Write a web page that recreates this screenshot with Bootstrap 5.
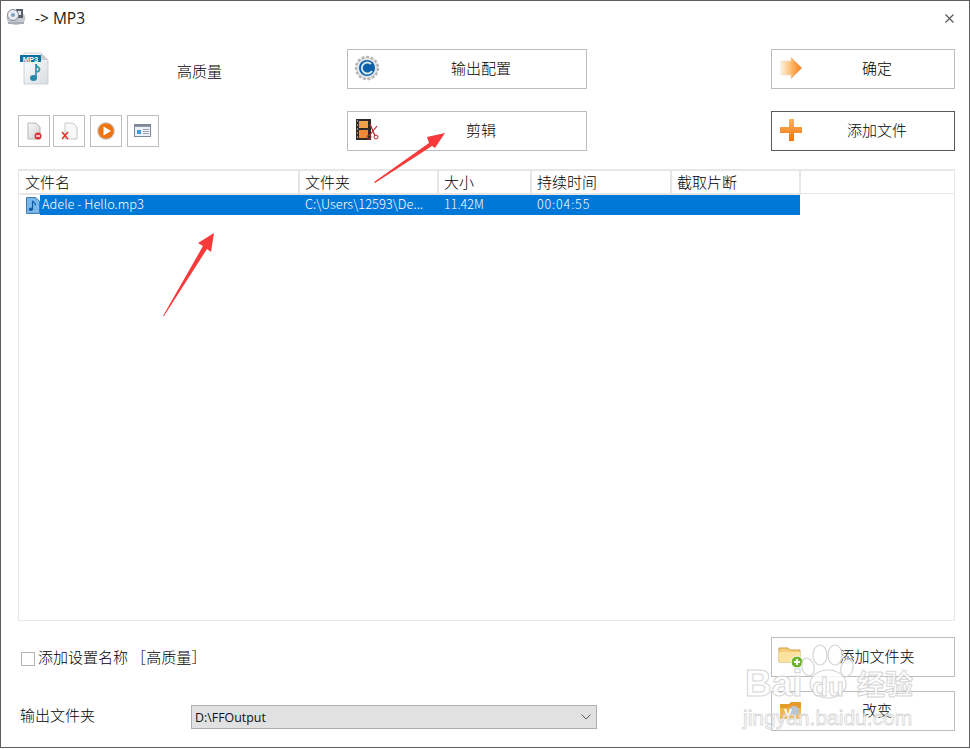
<!DOCTYPE html>
<html lang="zh-CN">
<head>
<meta charset="utf-8">
<title>-> MP3</title>
<link rel="stylesheet" href="https://cdn.jsdelivr.net/npm/bootstrap@5.3.0/dist/css/bootstrap.min.css">
<style>
html,body{margin:0;background:#fff;}
body{font-family:"Open Sans","Noto Sans CJK SC",sans-serif;color:#1a1a1a;font-size:14px;overflow:hidden;}
.cjk{font-family:"Noto Sans CJK SC",sans-serif;font-weight:300;font-size:15px;color:#000;}
.appwin{position:relative;width:970px;height:748px;border:1px solid #5f5f5f;overflow:hidden;}
.titlebar{height:48px;padding:6px 0 0 5px;align-items:flex-start;}
.titletext{font-size:15.5px;margin-left:9px;margin-top:1px;line-height:20px;color:#222;}
.closex{position:absolute;right:15px;top:13px;}
.topgrid{display:grid;grid-template-columns:329px 424px 184px;row-gap:22px;grid-template-rows:40px 40px;padding-left:17px;}
.mp3wrap{padding-left:2px;position:relative;}
.mp3icon{margin-top:3px;margin-right:-30px;}
.quality{margin-left:157px;line-height:40px;margin-top:2px;white-space:nowrap;}
.tbtn{width:32px;height:32px;border:1px solid #bdbdbd;background:#fff;padding:0;display:flex;align-items:center;justify-content:center;border-radius:0;}
.tools{margin-top:4px;}
.gap3{margin-right:3px;}
.gap5{margin-right:5px;}
.winbtn{position:relative;height:40px;width:100%;border:1px solid #bdbdbd;background:#fff;border-radius:0;padding:0 0 0 28px;display:block;text-align:center;}
.midbtn{width:240px;}
.winbtn.dark{border-color:#5a5a5a;}
.winbtn svg{position:absolute;left:5px;top:4px;}
.lbl{display:block;line-height:35px;height:38px;}
.listbox{margin:18px 14px 0 17px;height:452px;border:1px solid #e7e7e7;border-top-width:2px;}
.ftable{border-collapse:collapse;table-layout:fixed;width:781px;margin-left:1px;}
.ftable th{height:23px;padding:0 0 1px 5px;border-right:2px solid #e6e6e6;border-bottom:1px solid #e6e6e6;font-weight:300;line-height:20px;}
.headline{border-bottom:1px solid #e6e6e6;height:23px;margin-bottom:-23px;}
.ftable td{height:20px;padding:0 0 2px 6px;background:#0078d7;color:#fff;font-size:12.5px;line-height:18px;white-space:nowrap;overflow:hidden;}
.ftable td.namecell{padding:0;background:#fff;}
.ftable td.pathcell{font-size:12.9px;}
.namefill{background:#0078d7;flex:1;height:20px;padding-left:2px;line-height:18px;font-size:12.8px;}
.noteicon{width:20px;padding-left:6px;}
.timecell{letter-spacing:.85px;}
.bottomgrid{display:grid;grid-template-columns:1fr 184px;grid-template-rows:40px 40px;row-gap:14px;margin:16px 14px 0 19px;}
.checkrow{gap:3px;padding-left:1px;}
.wincheck{width:14px;height:14px;margin:3px 0 0 0;border:1px solid #b5b5b5;border-radius:0;background:#fff;}
.outlabel{width:171px;margin-top:13px;line-height:22px;}
.pathselect{width:406px;height:24px;margin-top:14px;padding:0 5px 0 3px;background:#e1e1e1;border:1px solid #adadad;font-size:12.4px;color:#111;}
.pathselect span{line-height:24px;margin-top:1px;}
.overlay{position:absolute;left:-1px;top:-1px;pointer-events:none;}
.wm{position:absolute;color:#fff;font-family:"Liberation Sans",sans-serif;-webkit-text-stroke:1px #cfcfcf;pointer-events:none;white-space:nowrap;opacity:.85;}
.wm1{left:744px;top:664px;font-size:37px;font-weight:700;line-height:38px;}
.wm1b{left:811px;top:671px;font-size:26px;font-weight:700;line-height:30px;}
.wm2{left:856px;top:666px;font-size:28px;line-height:32px;font-family:"Noto Sans CJK SC",sans-serif;font-weight:700;}
.wm3{left:742px;top:704px;font-size:21px;line-height:26px;-webkit-text-stroke:.8px #cfcfcf;}
</style>
</head>
<body>
<div class="appwin">
  <div class="titlebar d-flex">
    <svg width="20" height="19" viewBox="0 0 20 19"><ellipse cx="10" cy="11" rx="9.500" ry="7" fill="#c3c8ce"/><rect x="10" y="2" width="7" height="9" fill="#555f69"/><rect x="12" y="4" width="3" height="4" fill="#e6e8ea"/><circle cx="7" cy="8" r="5.500" fill="#e9edf1" stroke="#7d8791"/><circle cx="7" cy="8" r="2" fill="#7ea3c4"/><path d="M2 15h16v2H2z" fill="#a7aeb5"/></svg>
    <span class="titletext">-&gt; MP3</span>
    <svg class="closex" width="9" height="9" viewBox="0 0 9 9"><path d="M.5.5l8 8M8.500.5l-8 8" stroke="#555" stroke-width="1.100"/></svg>
  </div>

  <div class="topgrid">
    <div class="mp3wrap d-flex">
      <svg class="mp3icon flex-shrink-0" width="30" height="34" viewBox="0 0 30 34">
        <defs><linearGradient id="pg" x1="0" y1="0" x2="1" y2="1"><stop offset="0" stop-color="#fff"/><stop offset="1" stop-color="#d9dde0"/></linearGradient></defs>
        <path d="M4 1h17l7 7v24H4z" fill="url(#pg)" stroke="#c4c8cc" stroke-width=".8"/>
        <path d="M21 1v7h7z" fill="#c9cdd1"/>
        <rect x="0" y="3" width="21" height="7" fill="#0f6fa3"/>
        <text x="10.500" y="9.500" text-anchor="middle" font-size="7.500" font-weight="700" fill="#fff" font-family="Liberation Sans">MP3</text>
        <path d="M16 26V12c0 3 2 3 3 4s1 3-2 4" fill="none" stroke="#2b86ab" stroke-width="1.600"/>
        <ellipse cx="13.500" cy="26" rx="3.500" ry="3" fill="#2b86ab"/>
      </svg>
      <div class="quality cjk">高质量</div>
    </div>
    <button class="winbtn midbtn cjk"><svg width="28" height="28" viewBox="0 0 28 28"><circle cx="14" cy="14" r="11" fill="#e6e6e6" stroke="#b5b5b5" stroke-width="2.400" stroke-dasharray="3 1.600"/><circle cx="14" cy="14" r="8" fill="#0d5fa8"/><path d="M18 10a5.500 5.500 0 1 0 1 7" fill="none" stroke="#cfe6f7" stroke-width="2"/></svg><span class="lbl">输出配置</span></button>
    <button class="winbtn cjk"><svg width="28" height="28" viewBox="0 0 28 28"><defs><linearGradient id="ok" x1="0" x2="1"><stop offset="0" stop-color="#fdf3df"/><stop offset=".5" stop-color="#fdb96a"/><stop offset="1" stop-color="#f47a14"/></linearGradient></defs><path d="M4 7h10V3l11 11-11 11v-4H4z" fill="url(#ok)" stroke="#e7d6c4" stroke-width=".5"/></svg><span class="lbl">确定</span></button>

    <div class="tools d-flex">
      <button class="tbtn gap3" aria-label="移除"><svg width="18" height="18" viewBox="0 0 18 18"><defs><linearGradient id="gp" x1="0" y1="0" x2="1" y2="1"><stop offset="0" stop-color="#fafafa"/><stop offset="1" stop-color="#cfcfcf"/></linearGradient></defs><path d="M3 1h8l4 4v12H3z" fill="url(#gp)" stroke="#b5b5b5"/><circle cx="13" cy="14" r="3.500" fill="#d8343a"/><path d="M11 14h4" stroke="#fff" stroke-width="1.400"/></svg></button>
      <button class="tbtn gap5" aria-label="清除"><svg width="18" height="18" viewBox="0 0 18 18"><path d="M5 1h8l4 4v12H5z" fill="#f8f8f8" stroke="#c8c8c8"/><path d="M2 10l6 7M8 10l-6 7" stroke="#e6332a" stroke-width="1.600"/></svg></button>
      <button class="tbtn gap5" aria-label="播放"><svg width="20" height="20" viewBox="0 0 20 20"><circle cx="10" cy="10" r="9" fill="#cfcfcf"/><circle cx="10" cy="10" r="7.800" fill="#ef7410"/><path d="M7.500 5.500v9L15 10z" fill="#fff"/></svg></button>
      <button class="tbtn" aria-label="信息"><svg width="18" height="16" viewBox="0 0 18 16"><rect x=".5" y="1.500" width="16" height="12" fill="#eef1f5" stroke="#7d8896"/><rect x="1" y="2" width="15" height="1.800" fill="#7d8896"/><rect x="3" y="7" width="4" height="4" fill="#3f9be0"/><path d="M9 6.500h6M9 8.500h6M9 10.500h6" stroke="#9aa4b0"/></svg></button>
    </div>
    <button class="winbtn midbtn cjk"><svg width="28" height="28" viewBox="0 0 28 28"><rect x="3" y="3" width="15" height="21" fill="#2d2a28"/><rect x="6" y="5" width="9" height="7" fill="#f0a24b"/><rect x="6" y="14" width="9" height="8" fill="#ee8a35"/><path d="M4 5h1M4 9h1M4 13h1M4 17h1M4 21h1" stroke="#fff"/><path d="M17 8l5 12M24 10l-8 10" stroke="#b8242a" stroke-width="1.200"/><circle cx="16" cy="21" r="2" fill="none" stroke="#b8242a"/><circle cx="23" cy="21" r="2" fill="none" stroke="#b8242a"/></svg><span class="lbl">剪辑</span></button>
    <button class="winbtn dark cjk"><svg width="28" height="28" viewBox="0 0 28 28"><defs><linearGradient id="pl" x1="0" y1="0" x2="0" y2="1"><stop offset="0" stop-color="#fdb35c"/><stop offset="1" stop-color="#ef7510"/></linearGradient></defs><path d="M12 3h5v8h8v6h-8v8h-5v-8H3v-6h9z" fill="url(#pl)"/></svg><span class="lbl">添加文件</span></button>
  </div>

  <div class="listbox">
    <div class="headline"></div>
    <table class="ftable cjk">
      <colgroup><col style="width:279px"><col style="width:139px"><col style="width:93px"><col style="width:140px"><col style="width:129px"></colgroup>
      <thead><tr><th>文件名</th><th>文件夹</th><th>大小</th><th>持续时间</th><th>截取片断</th></tr></thead>
      <tbody><tr>
        <td class="namecell"><div class="d-flex"><div class="noteicon"><svg width="14" height="17" viewBox="0 0 15 18"><path d="M.5.5h10l4 4v13H.5z" fill="#7ab8ea" stroke="#2f6fa8"/><path d="M7 13V4c1 2 4 2 3 5" fill="none" stroke="#0e5da8" stroke-width="1.300"/><ellipse cx="5.300" cy="13" rx="2.300" ry="1.900" fill="#0e5da8"/></svg></div><div class="namefill">Adele - Hello.mp3</div></div></td>
        <td class="pathcell">C:\Users\12593\De...</td><td>11.42M</td><td class="timecell">00:04:55</td><td></td>
      </tr></tbody>
    </table>
  </div>

  <div class="bottomgrid">
    <div class="checkrow d-flex align-items-center">
      <div class="wincheck"></div><span class="cjk">添加设置名称 ［高质量］</span>
    </div>
    <button class="winbtn cjk"><svg width="28" height="28" viewBox="0 0 28 28"><path d="M2 6h9l2 2h10v12H2z" fill="#f3cf7c" stroke="#cf9f45"/><path d="M2 10h21v10H2z" fill="#fbe39f"/><circle cx="20" cy="20" r="6" fill="#6fb52e" stroke="#fff"/><path d="M17 20h6M20 17v6" stroke="#fff" stroke-width="1.800"/></svg><span class="lbl">添加文件夹</span></button>
    <div class="d-flex align-items-start">
      <span class="cjk outlabel">输出文件夹</span>
      <div class="pathselect d-flex align-items-center justify-content-between"><span>D:\FFOutput</span><svg width="10" height="6" viewBox="0 0 10 6"><path d="M.5.5L5 5 9.500.5" fill="none" stroke="#555"/></svg></div>
    </div>
    <button class="winbtn cjk"><svg width="28" height="28" viewBox="0 0 28 28"><path d="M3 8h9l2-2h10v17H3z" fill="#e69a2c"/><path d="M3 12h21v11H3z" fill="#f3b64d"/><circle cx="17" cy="15" r="5" fill="#b9c6d2"/><path d="M8 13l3 8 3-8" fill="none" stroke="#fff" stroke-width="2"/></svg><span class="lbl">改变</span></button>
  </div>

  <svg class="overlay" width="970" height="749" viewBox="0 0 970 749">
    <polygon points="374,182 429,143 427,137 445,133 435,148 432,146 375,183" fill="#f93a3a"/>
    <polygon points="163,316 203,246 198,243 214,233 211,252 207,249 164,316" fill="#f93a3a"/>
    <g fill="#fff" stroke="#cfcfcf" stroke-width="1.200" opacity=".85">
      <ellipse cx="808" cy="667" rx="6" ry="9" transform="rotate(-15 808 667)"/><ellipse cx="820" cy="655" rx="7" ry="10"/><ellipse cx="835" cy="655" rx="7" ry="10"/><ellipse cx="847" cy="668" rx="6" ry="9" transform="rotate(15 847 668)"/>
      <ellipse cx="828" cy="684" rx="18" ry="14"/>
    </g>
  </svg>
  <div class="wm wm1">Bai</div>
  <div class="wm wm1b">du</div>
  <div class="wm wm2">经验</div>
  <div class="wm wm3">jingyan.baidu.com</div>
</div>
<script src="https://cdn.jsdelivr.net/npm/bootstrap@5.3.0/dist/js/bootstrap.bundle.min.js"></script>
</body>
</html>
